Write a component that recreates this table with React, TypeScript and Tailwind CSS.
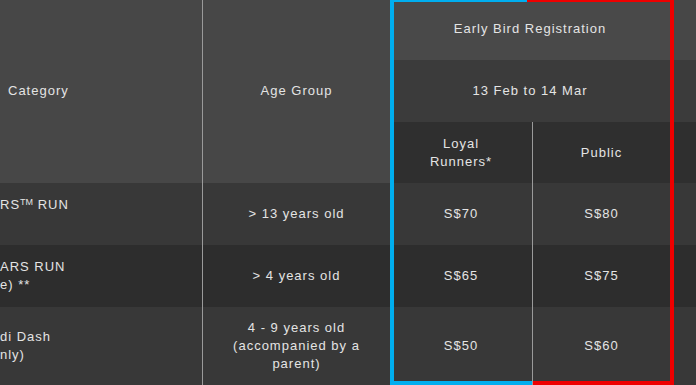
import React from 'react';

const rows = [
  {
    category: [<>RS<sup className="text-[9px] tracking-normal">TM</sup> RUN</>, '\u00a0'],
    age: ['> 13 years old'],
    loyal: 'S$70',
    pub: 'S$80',
    bg: 'bg-[#383838]',
  },
  {
    category: ['ARS RUN', 'e) **'],
    age: ['> 4 years old'],
    loyal: 'S$65',
    pub: 'S$75',
    bg: 'bg-[#2d2d2d]',
  },
  {
    category: ['di Dash', 'nly)'],
    age: ['4 - 9 years old', '(accompanied by a', 'parent)'],
    loyal: 'S$50',
    pub: 'S$60',
    bg: 'bg-[#383838]',
  },
];

export default function App() {
  return <div className="w-[696px] h-[385px] overflow-hidden bg-[#2d2d2d] font-['Liberation_Sans',Arial,sans-serif] text-[13px] tracking-[1px] text-[#e4e4e4]">
      <div className="relative -mt-[2px] grid grid-cols-[203px_187px_143px_137px_1fr] grid-rows-[62px_62px_61px_62px_62px_78px]">
        {/* Header */}
        <div className="row-span-3 border-r border-[#9a9a9a] bg-[#474747] flex items-center pl-2">
          Category
        </div>
        <div className="row-span-3 bg-[#474747] flex items-center justify-center">
          Age Group
        </div>
        <div className="col-span-2 bg-[#494949] flex items-center justify-center">
          Early Bird Registration
        </div>
        <div className="bg-[#474747]"></div>
        <div className="col-span-2 bg-[#3b3b3b] flex items-center justify-center">
          13 Feb to 14 Mar
        </div>
        <div className="bg-[#3b3b3b]"></div>
        <div className="border-r border-[#9a9a9a] bg-[#2f2f2f] flex items-center justify-center text-center leading-[18px]">
          Loyal<br />Runners*
        </div>
        <div className="bg-[#2f2f2f] flex items-center justify-center">
          Public
        </div>
        <div className="bg-[#2f2f2f]"></div>

        {/* Body */}
        {rows.map((row, i) => <React.Fragment key={i}>
            <div className={`${row.bg} border-r border-[#9a9a9a] flex flex-col justify-center leading-[18px] whitespace-nowrap overflow-hidden`}>
              {row.category.map((line, j) => <div key={j}>{line}</div>)}
            </div>
            <div className={`${row.bg} flex flex-col items-center justify-center text-center leading-[18px]`}>
              {row.age.map(line => <div key={line}>{line}</div>)}
            </div>
            <div className={`${row.bg} border-r border-[#9a9a9a] flex items-center justify-center`}>
              {row.loyal}
            </div>
            <div className={`${row.bg} flex items-center justify-center`}>
              {row.pub}
            </div>
            <div className={row.bg}></div>
          </React.Fragment>)}

        {/* Highlight box over the early bird columns */}
        <div className="absolute left-[390px] top-0 w-[284px] h-[387px] pointer-events-none">
          <div className="absolute left-0 top-0 bottom-0 w-1 bg-[#00aeef]"></div>
          <div className="absolute left-0 top-0 h-1 w-[137px] bg-[#00aeef]"></div>
          <div className="absolute left-0 bottom-0 h-1 w-[142px] bg-[#00aeef]"></div>
          <div className="absolute left-[137px] right-0 top-0 h-1 bg-[#ee0000]"></div>
          <div className="absolute right-0 top-0 bottom-0 w-1 bg-[#ee0000]"></div>
          <div className="absolute left-[143px] right-0 bottom-0 h-1 bg-[#ee0000]"></div>
        </div>
      </div>
    </div>;
}
